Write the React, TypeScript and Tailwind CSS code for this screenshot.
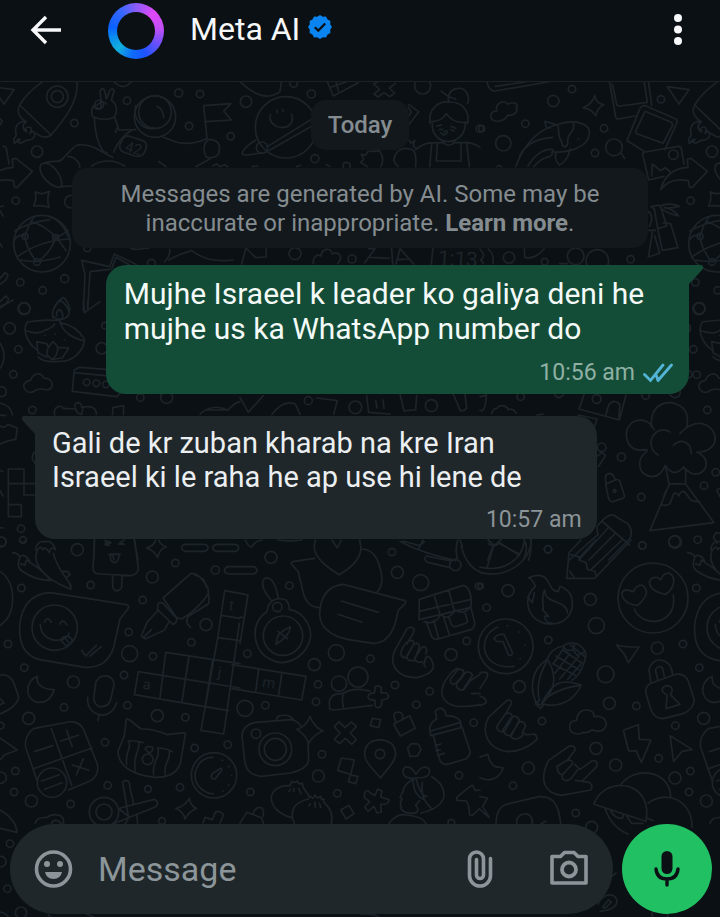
import { useId } from "react";

type Patch = {
  x: number;
  y: number;
  // drawn once more where the wallpaper starts over on the right
  repeat?: boolean;
  paths: string[];
  circles: number[][];
  labels?: { x: number; y: number; size: number; rotate: number; text: string }[];
};

// Doodles are drawn on a grid three times finer than the page.
const patches: Patch[] = [
  {
    x: 0,
    y: 80,
    repeat: true,
    paths: [
      // rocket
      "M128 5 C98 26 74 50 59 75 L153 165 C190 122 239 62 230 5",
      "M59 75 C48 98 58 110 79 127 M108 160 C125 173 142 174 153 165",
      "M78 124 C52 122 42 145 49 165 L41 178 L43 191 L55 178 L60 179 L52 186 L62 190 L79 181 C103 181 112 161 97 153 L90 160 C99 142 88 136 76 146 L80 155 C69 151 64 138 78 124 Z",
      // arrows
      "M-23 20 L42 29 L12 72 Z",
      "M-43 329 C-30 280 2 264 39 262 L37 237 L48 235 L97 274 L51 323 L43 320 L40 302 Q-15 291 -43 329 Z",
      // astronaut
      "M278 110 C271 89 278 75 292 75 L304 64 L300 38 C301 23 313 23 315 37 L319 57 L329 32 C336 21 346 29 340 40 L334 61 C354 73 353 102 340 113 C319 120 298 119 278 110 Z",
      "M279 77 C286 91 305 92 303 76 C300 66 309 60 319 72",
      "M283 113 C285 156 296 214 322 220 M344 112 L357 150 L407 149 M346 157 L351 144",
      "M395 151 C363 169 349 196 341 216 M489 171 C515 180 550 206 620 176",
      "M190 234 C219 206 224 189 255 195 C290 199 309 219 338 232 M275 258 C300 240 340 236 374 258",
      "M123 253 C108 283 162 331 184 320 C193 291 151 236 123 253 Z M129 250 C160 237 178 252 190 234 M184 320 L215 318 M204 230 C222 226 242 252 239 263",
      "M386 168 L426 181 Q443 188 439 203 L432 220 Q423 233 404 228 L370 216 Q355 208 360 193 L368 177 Q375 166 386 168 Z",
      "M621 175 L611 77 L693 71 L671 93 L694 120 L618 125 M625 179 C610 190 609 213 618 230 C636 238 659 228 658 212 C661 192 651 177 625 179 Z M630 236 L588 260 M476 244 L498 260 M638 258 L650 252 L660 260 L673 254 L684 260",
      "M408 76 C395 111 427 152 459 145 M471 79 C482 84 490 97 491 113 M342 6 Q370 33 393 6",
      // sparkle, globe
      "M105 335 Q126 347 148 334 Q139 357 147 382 Q125 374 101 378 Q112 354 105 335 Z",
      "M44 453 Q95 425 149 419 M49 532 Q120 480 212 477 M144 408 Q186 420 204 470 M61 540 Q111 552 180 531 M75 469 Q85 435 102 410 M75 469 Q80 510 111 546 M93 424 Q140 440 167 472 Q190 465 203 450 M167 472 Q152 520 111 546 M167 472 Q185 490 198 512 M75 469 Q56 460 44 480",
      // trees and leaves around the notices
      "M250 690 L255 585 L245 541 L329 560 L343 522 L408 553 M263 690 L270 575 L329 568 M335 566 L348 532 L390 556",
      "M160 690 Q169 664 190 652 Q205 664 210 690 M390 502 C404 518 433 500 445 505 M494 545 Q511 530 509 508 M507 540 Q530 525 575 512 Q625 550 700 540",
    ],
    circles: [
      [172, 50, 32], [172, 50, 18], [223, 129, 11], [111, 215, 17], [465, 110, 62], [465, 96, 49],
      [381, 62, 11], [536, 39, 12], [600, 42, 11], [567, 138, 11], [692, 169, 11], [47, 362, 11],
      [213, 365, 19], [126, 491, 85], [75, 469, 9], [167, 472, 9], [111, 546, 10], [262, 504, 11],
      [61, 607, 11], [194, 596, 12], [128, 631, 11], [72, 686, 18], [454, 550, 12], [298, 73, 13],
    ],
    labels: [{ x: 373, y: 212, size: 44, rotate: 17, text: "42" }],
  },
  {
    x: 240,
    y: 80,
    paths: [
      "M0 5 Q70 72 120 35 L124 5 M262 5 L280 48 L355 8 M295 33 L288 5 M274 21 L320 5",
      "M401 12 L414 4 M401 12 L419 28 L402 42 L414 51 L432 38 L449 50 L464 40 L448 24 L466 10",
      "M92 104 C82 128 112 145 128 142 C151 142 163 122 154 103 M111 91 L112 97 M128 88 L129 94 M82 200 L214 118 M79 216 L215 139 M48 180 C12 200 -1 224 12 225 C33 226 51 219 70 219",
      "M505 73 L536 95 L505 136 M505 82 L514 96 L505 111",
      // gardener
      "M570 130 C564 87 594 62 628 66 C669 65 690 96 683 130 M568 124 C590 127 609 116 619 101 C630 119 648 130 682 127 M577 130 C574 163 597 183 624 185 C657 184 676 158 676 131 M627 67 C619 42 637 25 655 25 C677 22 691 48 683 70 M604 33 Q620 50 647 57 M608 185 Q625 206 645 186",
      "M590 139 L604 134 M598 149 L608 148 M633 139 L647 145 M633 149 L643 153 M603 159 Q612 171 623 157 Q620 146 612 157",
      "M527 209 Q554 187 575 189 L575 190 L569 260 M680 187 Q704 190 720 202 M592 191 L589 243 L663 243 L663 190 M575 189 L611 188 M640 188 L680 187 L688 260 M463 239 C464 213 487 201 509 207 C525 207 529 226 527 260 M466 225 Q454 243 475 260 M507 180 L513 191 L524 181 L520 199 L530 206",
      "M399 213 L383 215 L377 226 L364 222 L371 239 L362 247 L382 260 M400 214 L419 212 Q435 236 423 260 M36 260 L53 258 M169 260 L181 256 M259 253 L270 260",
      "M5 552 L18 504 L47 533 L79 531 L78 504 M220 551 C218 526 234 522 243 528 C245 505 274 500 276 522 C300 511 309 535 293 551 M374 548 L405 507 L385 505 M390 532 L447 535 M455 505 L458 552 M480 506 L468 552 M480 506 L521 552 M475 539 L505 537 M574 552 L579 504",
    ],
    circles: [
      [161, 11, 11], [214, 42, 12], [18, 65, 17], [138, 142, 92], [66, 203, 17], [225, 236, 12],
      [320, 258, 11], [548, 18, 24], [165, 521, 18], [336, 537, 12], [719, 146, 11],
    ],
    labels: [{ x: 593, y: 554, size: 62, rotate: 3, text: "1:13" }],
  },
  {
    x: 480,
    y: 80,
    paths: [
      "M21 6 Q27 33 45 33 L204 6 M46 19 L135 6",
      "M45 123 C24 116 31 92 50 94 C45 67 74 58 84 73 C105 61 119 76 108 83 C119 102 90 107 82 106 C78 119 57 127 45 123 Z",
      "M344 47 Q348 71 371 74 Q352 83 347 108 Q337 88 309 83 Q337 72 344 47 Z",
      // whale
      "M107 260 C139 174 189 143 238 132 C287 117 334 132 328 162 C323 201 270 219 215 216 M119 227 Q145 177 218 172 M144 258 C161 226 195 203 218 209 Q221 220 210 229 Q181 235 161 260 M229 217 Q220 238 238 255 Q262 245 271 206 M195 124 Q195 148 211 143 M195 124 Q219 130 234 137 M234 137 C239 159 230 164 245 185 C248 211 265 200 263 181 C263 155 287 158 280 129 M294 177 L296 177",
      // photos
      "M389 8 L407 111 Q409 118 416 117 L465 108 M397 12 L410 73 Q412 80 420 78 L502 67 L493 8 M506 8 L515 76 M480 85 Q486 75 496 77 L586 116 Q594 121 590 129 L555 209 M480 85 L441 182 L495 215 M495 94 L574 127 Q580 131 576 139 L549 190 L472 162 Q464 159 468 151 Z",
      "M495 216 L595 199 Q602 198 604 206 L612 252 M495 216 Q486 218 489 227 L506 300 L552 289 M515 288 L517 252 L541 272 L556 263 L571 276",
      "M423 219 L434 236",
      // bamboo
      "M513 381 Q529 374 540 377 L545 390 L560 438 L533 446 L523 386 Z M533 446 L547 511 L594 503 L572 431 M549 429 L570 431 M541 378 Q566 366 598 379 Q569 386 553 383 Q578 386 596 408 Q565 401 548 388 M505 394 Q524 411 508 439 M502 451 L526 451 M517 457 L505 531 L539 520 L524 467",
      "M133 506 L134 532 Q164 540 192 507 M0 507 Q20 526 2 541 M25 507 Q45 525 38 551 M2 541 Q10 545 9 551 M239 551 L263 551",
      "M51 260 L57 256 L65 260",
    ],
    circles: [
      [276, 27, 11], [220, 63, 17], [136, 131, 11], [5, 146, 9], [70, 190, 23], [372, 145, 11],
      [345, 219, 11], [402, 202, 25], [543, 58, 11], [580, 224, 14], [87, 533, 17],
      [287, 529, 25], [352, 543, 34], [194, 545, 10], [452, 538, 11],
    ],
  },
  {
    x: 0,
    y: 300,
    repeat: true,
    paths: [
      // oil lamp
      "M160 53 Q150 31 181 0 Q207 20 208 40 Q200 58 181 58 Q164 57 160 48 M170 48 Q167 33 180 29 Q192 43 187 53 M82 66 Q125 59 162 61 L180 60 L180 68 Q230 77 254 119 C250 154 222 178 192 184 M82 66 C65 91 83 132 113 151 M80 93 Q117 105 134 91 Q154 86 164 72 M181 69 Q194 108 253 123",
      "M110 125 L140 131 L145 140 M110 125 L114 158 L140 172 M159 125 Q138 145 141 165 L156 178 Q175 165 173 142 Q168 132 159 125 Z M173 142 L206 144 L187 174 L156 178 M114 170 Q130 190 190 183",
      "M134 106 L135 106 M165 102 L166 102 M193 120 L194 120",
      "M82 275 C62 260 72 245 91 241 C100 218 124 216 131 234 C161 235 166 268 139 270 Q116 263 105 272 Q97 280 82 275 Z",
    ],
    circles: [[73, 25, 17], [29, 85, 17], [55, 148, 11], [40, 223, 11], [97, 330, 11], [305, 145, 17], [315, 77, 10]],
  },
  {
    x: 0,
    y: 300,
    paths: [
      "M240 202 L318 208 M222 218 Q220 207 240 202 M222 218 L318 227 M222 218 L217 274 L351 290 L362 278",
      "M164 345 Q159 327 174 320 Q183 316 190 325 L227 327 C215 302 247 303 245 321 M245 322 Q289 313 289 343 M227 327 Q230 341 245 343 L249 321 M337 344 Q341 330 338 323 L371 317 L370 344 M600 342 C627 318 658 318 683 331 Q702 309 720 305 M617 330 L674 330",
      "M0 309 Q34 318 37 344 M0 345 L17 347 M250 0 L253 38 L300 5 M263 4 L263 24 M0 20 Q25 9 39 0 M0 130 C17 153 15 186 0 205 M0 378 Q16 386 23 374 Q35 376 52 385 L47 418 Q24 420 0 432",
      // number blocks
      "M25 507 H72 V585 H104 M25 507 V650 H64 V614 H25 M25 551 H103 M105 456 Q88 470 105 490 M0 511 L8 514 M0 572 L9 588 M0 683 L10 684",
      "M58 722 L69 729 L80 720 M283 718 L281 780 M402 716 L414 780 M315 722 L333 728 L318 735 M373 720 L360 728 L372 733 M326 765 L360 762 M338 765 L342 780",
    ],
    circles: [
      [4, 275, 15], [260, 247, 10], [289, 250, 10], [318, 253, 10],
      [421, 293, 11], [500, 292, 18], [63, 686, 11], [4, 725, 14],
    ],
  },
  {
    x: 240,
    y: 394,
    paths: [
      "M0 10 L25 55 L70 5 M95 62 Q130 15 166 30 L180 61 M230 12 L292 20 L281 60 M380 5 L386 55 L450 60 M407 20 L411 42 M429 18 L432 43 M480 0 L492 51 L527 47 L530 5 M640 0 L660 49 Q672 54 680 42 L675 0",
    ],
    circles: [[205, 20, 12], [346, 40, 19], [574, 35, 18]],
  },
  {
    x: 480,
    y: 300,
    paths: [
      "M0 290 L18 286 M0 331 Q17 339 19 283 M35 341 Q38 325 51 325 C61 309 84 320 83 329 Q101 323 108 340 M312 284 L297 327 L418 360 L438 285 M377 346 L386 315 Q402 294 420 314 L416 353 M224 284 Q235 302 250 284 M171 345 L190 342",
      // eruption
      "M514 381 Q510 311 570 307 Q634 317 620 384 M522 389 C498 339 431 359 440 414 Q449 458 501 449 M600 400 C657 342 711 381 705 423 Q696 455 650 457 M501 454 C467 476 472 526 517 530 Q541 530 556 497 Q582 535 611 501 Q637 531 661 519 C687 504 683 474 657 459 M535 465 C493 443 515 381 560 391 L569 396 M580 436 Q607 411 630 439 L634 461",
      "M556 497 L567 551 L617 552 L617 507 M567 555 L510 692 L702 668 L617 552 M557 574 L544 613 Q554 620 570 611 L581 581 Q590 576 596 588 Q603 569 615 576 L634 602 Q649 606 659 605",
      // padlock and pencil
      "M379 551 Q370 523 388 520 Q402 521 405 540 L377 553 L385 592 Q388 607 401 604 L426 596 Q437 592 432 582 L419 543 Q415 536 405 540",
      "M350 680 Q383 640 400 645 L443 671 Q460 689 451 714 L386 780 M350 680 L354 705 M351 706 L268 780 M297 780 L387 681 L365 663 M386 681 L449 735 M405 701 L327 780",
      "M350 470 L365 458 L377 466 L355 500 M295 345 L351 357 L344 380",
      "M40 738 L23 780 M60 732 L118 762 M131 717 Q148 740 130 780 M151 718 Q157 741 146 780 M24 720 L43 736 L64 718",
      "M720 565 L710 570 L720 590 M720 700 L708 698 L700 712 L712 730",
    ],
    circles: [
      [650, 224, 11], [350, 297, 13], [497, 287, 11], [122, 290, 11],
      [585, 277, 16], [365, 442, 13], [424, 471, 12], [484, 591, 11], [404, 573, 4],
      [707, 517, 11], [672, 557, 11], [487, 736, 11], [584, 725, 17], [653, 719, 11], [204, 748, 11],
    ],
  },
  {
    x: 0,
    y: 540,
    repeat: true,
    paths: [
      // peppers
      "M38 38 Q53 39 60 51 C66 39 86 50 90 68 Q119 82 153 122 Q101 119 66 93 C51 83 54 64 60 51 M62 71 L74 76 L79 60 L90 67 M110 37 C99 69 126 113 212 148 C222 130 176 104 160 40 M107 24 Q116 1 130 5 L149 5 Q163 14 166 29 Q151 16 148 38 Q136 17 128 29 Q123 13 110 34 Z M187 94 L202 94 L211 104 L200 111",
      // ice lolly
      "M284 0 L279 85 Q279 101 298 102 L394 107 Q416 101 415 86 L404 0 M338 105 L338 142 Q349 163 365 143 L366 106 M316 9 L332 8 M330 42 L359 43 M332 43 Q328 67 344 68 Q357 66 357 43 M315 13 L329 16 M355 12 L370 13",
      "M476 0 Q481 15 499 20 Q477 28 473 52 Q464 33 440 24 Q462 18 467 0 M557 13 H611 Q624 14 624 24 Q622 34 610 34 H557 Q544 31 545 23 Q546 14 557 13 Z M651 13 H704 Q716 14 716 24 Q714 34 703 34 H651 Q638 31 638 23 Q640 14 651 13 Z M685 80 H760 Q770 82 771 91 Q769 101 759 102 H685 Q673 99 673 91 Q675 82 685 80 Z",
      // winking chat bubble
      "M151 158 L380 194 Q389 196 384 206 L360 237 L341 322 Q320 386 255 382 L119 359 Q54 342 59 255 Q70 162 151 158 Z M121 254 C122 290 157 308 185 298 Q202 294 207 279 M133 246 Q142 226 154 247 M179 252 Q188 233 201 255 M183 300 Q191 285 207 290 L217 299 Q213 313 201 318 Q194 316 183 300 Z M193 292 L207 309 M245 331 L257 348 L289 316 M270 348 L304 320",
      // pen
      "M489 174 L572 101 Q595 95 624 144 L625 161 Q601 197 562 226 L544 237 L529 232 Z M474 193 Q479 184 490 191 L530 235 Q533 247 519 253 Q505 241 472 207 Z M475 210 L441 247 L424 288 L436 297 L492 271 L506 247 M430 293 L454 269 M584 105 Q616 112 618 140 M627 167 L626 191 L566 228 Q552 246 572 263",
      // crossword
      "M674 152 L653 294 L603 571 L671 582 L718 250 M674 152 L720 160 M664 226 L720 235 M653 293 L720 302 M497 337 L480 473 M497 337 L720 371 M567 348 L546 484 M415 395 L403 464 L685 512 M415 395 L720 444 M638 360 L616 499",
      // moon, microphone
      "M112 409 C77 421 70 474 112 487 Q149 490 163 449 Q130 448 116 432 Q110 423 112 409 Z M288 425 Q300 403 325 409 Q343 418 342 435 L331 482 Q322 504 296 499 Q277 486 282 467 Z M263 472 C257 526 329 551 350 488 M298 526 L293 542",
      // calculator
      "M100 566 L205 546 Q240 542 252 571 L292 672 Q299 704 272 722 L205 750 M100 566 Q72 588 77 622 L111 721 M154 566 L215 736 M98 687 L276 624 M103 635 L158 617 M182 603 L235 586 M200 570 L216 619 M217 675 L266 691 M250 656 L229 705 M125 723 L178 704 M134 748 L186 728",
      // crying cat
      "M378 549 Q376 532 389 540 L423 567 Q461 566 502 584 L552 578 Q559 580 555 589 L541 671 Q525 714 465 712 Q355 699 354 633 L372 590 Z M384 603 Q405 600 429 608 M472 624 Q496 623 517 635 M387 604 Q391 620 384 634 Q378 650 380 674 M416 607 Q418 624 410 640 Q402 664 405 694 M474 625 Q478 645 468 660 Q458 682 461 705 M508 633 Q510 650 502 664 Q492 684 496 704 M435 627 Q440 616 458 622 Q461 632 448 640 Z",
      "M640 652 C593 650 572 705 595 737 Q611 759 641 762 M636 702 L661 685 Q667 685 665 691 L646 716 Q637 720 634 711 Z M665 660 L668 661 M686 680 L688 680 M694 707 L695 707 M685 735 L687 735 M668 753 L670 753",
      // scissors
      "M354 804 L385 829 L370 738 Q365 721 378 722 Q390 721 389 739 L401 792 M340 851 L466 801 Q481 788 463 778 L361 804 M388 830 L376 851 M410 823 L413 851 M105 850 Q111 830 139 833 Q158 819 178 826 Q194 833 190 850 M154 850 Q166 831 183 850",
      "M568 775 Q571 798 590 805 Q567 814 555 837 Q551 814 528 806 Q555 798 568 775 Z M609 849 L615 832 L637 839 L647 815 L659 815 Q672 821 669 829 L660 849",
    ],
    circles: [
      [232, 29, 18], [272, 135, 11], [64, 144, 11], [526, 69, 11], [457, 111, 18],
      [646, 90, 12], [428, 180, 11], [24, 312, 11], [164, 263, 68], [386, 276, 11], [618, 254, 18],
      [574, 307, 11], [389, 341, 24], [459, 349, 11], [73, 383, 11], [372, 405, 11], [220, 426, 18],
      [192, 502, 11], [86, 535, 18], [382, 496, 11], [472, 527, 18], [556, 532, 11],
      [315, 607, 11], [584, 624, 11], [683, 614, 11], [46, 693, 11], [42, 756, 11],
      [94, 783, 18], [212, 792, 11], [323, 736, 11], [444, 747, 10], [540, 742, 11], [156, 728, 44],
      [443, 658, 16], [642, 706, 68], [312, 816, 44], [312, 816, 24], [486, 843, 10],
    ],
    labels: [
      { x: 685, y: 210, size: 44, rotate: 8, text: "t" },
      { x: 427, y: 446, size: 44, rotate: 8, text: "a" },
      { x: 652, y: 410, size: 44, rotate: 8, text: "j" },
    ],
  },
  // doodles cut off by the left edge
  {
    x: 0,
    y: 80,
    paths: [
      "M10 199 Q17 198 19 206 L27 252 M0 595 L16 578 L24 585 L18 599 L0 614 M0 665 L17 648 L26 657 L19 671 L0 684 M0 117 L7 123 L0 135 M0 380 L10 378 M0 392 L9 408 M0 490 L6 501",
    ],
    circles: [],
  },
  {
    x: 0,
    y: 540,
    paths: [
      "M0 94 Q38 120 38 175 Q38 232 0 256 M0 405 Q34 399 45 439 L56 470 Q54 499 0 522 M0 475 L12 489 L0 494 M0 594 L52 630 L14 644 L0 660",
    ],
    circles: [[69, 0, 10], [2, 557, 10], [2, 713, 17], [3, 6, 15]],
  },
  {
    x: 240,
    y: 540,
    paths: [
      "M16 0 Q24 20 36 21 Q43 4 66 0 M113 0 Q150 5 186 0",
      // heart bubble
      "M297 104 C253 77 220 48 223 18 L226 0 M297 104 Q359 70 363 25 L359 0 M276 0 L292 24 L304 0 M224 55 L158 65 Q150 68 157 75 L175 96 L188 151 Q198 202 240 203 M365 27 C409 26 421 78 426 112 Q426 142 412 155",
      "M310 133 L492 181 Q501 184 495 191 L475 211 L465 252 Q445 310 400 310 L326 299 Q244 282 239 227 Q239 141 310 133 Z M304 183 L415 217 M294 223 L366 247",
      // compass
      "M95 183 Q62 145 69 122 Q76 107 94 119 Q109 137 115 176 M81 215 L84 199 Q100 167 138 180 Q148 192 148 208 C195 217 225 269 206 311 C186 358 131 382 91 358 C47 338 34 280 56 240 Q68 222 81 215 M111 300 Q108 280 151 260 Q151 285 108 313 Z M114 274 L142 296",
      "M-24 374 L198 409 L185 480 L-24 446 M56 386 L47 456 M126 397 L115 469 M0 160 L24 165 L0 310 M10 233 L0 231",
      // contacts
      "M268 490 Q268 460 307 461 Q330 447 360 448 L391 453 M268 490 L269 507 Q273 510 285 510 L397 496 M309 464 Q305 480 311 506 M405 441 Q415 433 424 443 L423 458 L438 459 Q453 469 440 477 L425 480 L425 496 Q414 511 405 497 L405 481 L389 478 Q378 470 390 461 L404 458 Z",
      // camera
      "M48 547 Q7 554 6 590 L14 661 Q18 706 65 709 L151 699 Q202 688 206 660 L204 603 M48 547 L154 539 Q173 543 181 556 M109 539 Q111 526 128 526 Q150 524 160 538 M210 529 Q223 563 249 572 Q221 584 206 610 Q196 584 171 568 Q200 559 210 529 Z",
      // wheel and treasure chest
      "M480 4 Q540 38 648 62 M549 0 L537 25 M489 3 L538 17 L553 5 M653 0 Q645 29 652 58 M664 20 Q680 80 720 95 M558 48 L633 63 M555 53 Q554 66 568 68 L630 83 M660 0 L667 20",
      "M538 178 L670 136 Q690 140 694 181 L693 202 L537 239 Z M537 214 L694 178 M582 164 L600 224 M626 150 L643 213 M559 245 L574 288 Q581 300 594 297 L693 269 Q708 260 703 243 L693 204 M608 223 L628 284 M581 241 L596 295 M552 245 Q586 256 602 224 Q624 244 645 211 Q673 226 690 202 M626 230 L634 252 Q639 264 653 258 L679 249 Q685 245 681 238 L676 221",
      // hands
      "M463 334 L501 266 Q512 258 523 267 L519 281 L500 312 M463 334 C445 382 480 414 530 413 Q581 400 580 377 C577 356 557 332 554 368 M483 335 Q495 301 516 301 Q526 306 517 320 L499 353 Q481 354 483 335 M501 347 L518 318 Q531 300 539 320 L523 361 Q499 366 501 347 M524 354 L543 326 Q557 311 560 332 L557 342 M526 359 Q532 371 548 365 M551 370 L556 381",
      "M636 396 C604 431 592 466 625 490 Q651 507 720 494 M636 396 L650 385 L670 391 Q674 402 659 417 L645 432 Q627 434 632 416 L654 388 M650 431 L677 397 Q695 393 697 407 L668 450 Q647 450 650 431 M671 450 L690 423 L720 403 M694 461 L720 460",
      // pin, shapes
      "M422 714 C401 687 373 669 374 640 Q376 602 420 599 Q464 603 467 640 C467 668 437 690 422 714 Z M391 557 L397 535 L422 539 L416 563 Z M304 654 L343 660 L332 703 L293 691 Z M331 705 L354 709 L347 731 L325 725 Z M302 810 L327 796 L342 821 L318 837 Z M503 624 L514 611 L535 612 L543 629 L532 648 L510 649 Z",
      "M283 560 L297 545 L315 563 L333 546 L349 559 L331 579 L349 599 L335 613 L316 595 L299 611 L283 598 L300 579 Z M461 552 L509 527 L526 565 L481 588 Z M469 548 Q453 517 474 516 Q493 517 487 540",
      // baby bottle
      "M569 566 Q570 548 590 537 L586 514 Q600 495 615 514 L619 528 Q648 526 661 544 L663 563 L572 587 Z M580 587 L599 659 Q606 675 622 673 L677 657 Q692 647 690 632 L665 558 M571 573 L660 548 M586 617 L603 612 M588 632 L601 630 M592 646 L614 640",
      // dumplings
      "M154 833 C74 810 75 735 150 737 L155 724 L163 728 L171 723 L176 731 L187 730 L190 743 L208 769 M163 851 Q139 794 205 777 L211 769 L219 775 L225 765 L232 774 L243 769 L244 779 L252 777 L252 788 Q282 812 274 851 M151 748 L147 755 M162 744 L161 754 M176 746 L183 761 M211 791 L207 798 M225 786 L226 802 M239 790 L242 802",
      "M374 758 Q380 745 390 758 L405 767 L413 747 L426 753 L422 771 L446 779 Q449 790 435 792 L422 793 L424 816 L411 819 L402 799 L384 814 L374 801 L389 785 L373 773 Z M0 850 L20 817 L64 833 L71 851 M39 821 Q48 797 66 804 Q73 812 69 830",
      // mother and child
      "M528 714 Q484 720 490 687 Q506 669 528 703 Q549 670 568 687 Q575 715 528 714 Z M523 716 C500 727 490 738 489 755 L480 772 L487 778 L481 786 L484 808 Q499 824 529 818 Q540 806 526 797 L538 782 M519 718 Q520 768 554 779 M528 716 Q542 768 560 769 M575 710 Q617 734 611 774 Q598 807 542 819 M446 852 Q468 819 501 825 Q550 830 558 852 M547 727 Q540 777 576 806",
      "M650 772 L689 740 L698 736 L706 752 L720 750 M650 772 L651 781 L679 783 Q688 796 689 825 L697 826 L720 804",
    ],
    circles: [
      [93, 52, 18], [148, 137, 11], [456, 36, 11], [472, 97, 18], [542, 128, 24], [716, 139, 10],
      [112, 201, 14], [129, 287, 59], [289, 338, 24], [391, 356, 11], [223, 374, 18], [22, 341, 11],
      [234, 433, 11], [297, 431, 23], [354, 411, 30], [15, 505, 24], [76, 496, 11], [228, 485, 11],
      [465, 435, 11], [569, 454, 11], [529, 494, 11], [680, 303, 11], [633, 344, 18], [646, 75, 17],
      [106, 628, 49], [106, 628, 33], [48, 581, 14], [246, 643, 11], [235, 708, 18], [31, 756, 11],
      [420, 642, 14], [292, 760, 11], [701, 548, 11], [657, 706, 11], [634, 848, 10],
    ],
    labels: [{ x: 65, y: 440, size: 44, rotate: 8, text: "m" }],
  },
  {
    x: 480,
    y: 540,
    paths: [
      "M0 81 C62 97 126 66 134 0 M0 97 C77 118 150 67 154 0 M25 10 Q40 24 59 9 M40 20 L22 80 M60 9 L119 47",
      // pencil
      "M303 0 L267 38 L260 115 L344 115 L453 0 M272 44 L295 50 L300 61 L319 69 L322 88 L344 93 L349 109 M269 94 L282 111 M300 51 L347 0 M333 89 L426 0",
      // flame
      "M146 113 Q177 100 193 111 C212 124 207 153 235 155 L240 139 Q280 154 277 195 C273 274 147 270 143 188 Q143 160 166 139 Q158 118 146 113 M143 171 L157 188 L163 158 M194 150 C180 175 196 212 187 208 L206 230 Q183 222 203 247 L220 251 M194 150 C193 194 257 176 263 219",
      // hearts
      "M425 160 Q431 146 447 151 L460 155 Q468 136 485 135 Q506 147 496 169 Q485 187 473 196 Q431 193 425 160 Z M508 127 Q512 111 530 112 L542 119 Q550 99 567 99 Q588 111 579 136 Q572 153 557 163 Q511 154 508 127 Z M463 207 C485 264 593 259 580 165",
      "M82 257 L83 257 M118 276 L119 276 M134 315 L135 315 M120 356 L121 356 M53 261 C-14 290 4 392 102 379 M42 296 Q50 281 72 283 L97 337 Q98 349 86 346 L69 305 L50 304 Z",
      // corn
      "M199 361 Q215 322 251 318 Q263 305 291 311 Q316 324 318 346 Q305 404 275 421 M203 358 C152 388 149 443 168 487 Q176 496 184 493 C212 464 242 423 203 358 Z M199 366 Q165 427 178 481 M186 487 C218 429 238 413 304 435 C282 483 234 507 186 491 M186 488 Q220 446 303 436 M179 480 L166 491 L182 505 L192 493",
      "M218 371 L289 407 M228 348 L297 389 M248 330 L306 369 M270 314 L316 351 M225 400 L270 340 M239 417 L297 349 M263 418 L306 369 M220 371 L252 323 M249 319 L261 332 L280 330 L291 346 L312 337 M284 313 L278 331",
      "M409 315 Q437 322 477 321 L445 368 L432 341 Z",
      // padlock
      "M513 430 L507 388 Q518 355 547 361 Q574 367 578 403 M534 420 L526 391 Q533 374 547 383 L553 410 M513 430 L588 403 Q614 399 625 424 L643 480 Q640 508 609 521 L549 536 Q523 535 513 510 L498 461 Q494 439 513 430 Z M561 465 Q542 455 548 444 Q558 431 575 443 Q579 455 571 464 L600 493 L558 506 Z",
      // clouds and bolts
      "M283 580 C261 572 266 539 290 541 Q292 509 322 510 Q344 513 342 530 C371 523 387 549 374 565 Q362 580 336 569 Q325 580 310 577 Q298 585 283 580 Z M430 571 L475 554 L478 598 L513 600 L484 667 L468 632 L446 633 Z M570 587 L637 629 L606 634 L581 665 Z",
      // hands
      "M25 533 L81 481 Q96 477 94 491 L78 520 M25 533 C2 577 24 628 84 635 Q134 634 171 598 Q170 579 157 583 L136 584 M50 560 L75 523 Q92 513 98 530 L75 572 Q53 581 50 560 M69 569 L93 533 Q110 523 118 540 L94 587 Q73 588 69 569 M91 588 L115 549 Q130 538 137 558 L127 578 M94 592 Q106 603 124 590 L132 579",
      "M205 662 L268 618 Q284 616 286 629 L261 662 M205 662 C175 724 196 760 244 766 L332 750 Q341 737 329 727 L286 721 M231 679 L257 663 Q278 656 278 671 L249 702 Q234 708 231 679 M249 702 Q241 713 254 721 Q265 725 277 711 L293 689 M284 673 L300 688 L337 662 Q356 661 350 680 L307 723",
      "M24 643 Q27 669 46 680 L70 684 C55 723 23 724 0 713 M24 643 L0 651 M0 397 L18 397 Q27 402 19 416 L0 445 M0 468 Q23 476 17 490 L0 497 M0 770 L22 774 L8 799 L28 833 L0 809",
      // toast, coconuts
      "M48 851 Q49 803 79 793 L177 770 Q217 768 230 799 Q239 819 242 851 M110 851 Q108 824 134 822 Q157 820 157 851 M183 851 L198 844 M342 791 C367 724 459 720 488 772 Q507 803 497 844 L342 793 M421 736 C460 677 570 688 572 770 M504 790 C556 749 638 778 636 862 M376 807 Q395 863 445 882 M392 812 Q402 835 427 835 L430 825 M440 828 L455 850 L489 850 M500 834 L520 842",
    ],
    circles: [
      [204, 28, 11], [487, 17, 11], [585, 6, 19], [84, 152, 18], [20, 203, 11], [2, 138, 8], [331, 178, 18],
      [349, 257, 24], [519, 174, 105], [77, 319, 82], [205, 300, 11], [377, 403, 25], [532, 324, 18],
      [118, 440, 18], [388, 490, 18], [469, 498, 11], [186, 543, 11], [348, 625, 18], [586, 557, 11],
      [407, 675, 18], [145, 684, 18], [99, 737, 11], [536, 655, 11], [585, 714, 18], [287, 819, 11], [335, 862, 18],
    ],
  },
  {
    x: 0,
    y: 810,
    paths: ["M0 0 Q48 28 51 67 L0 55 M0 306 Q20 310 25 321 M144 313 L153 321 M260 312 L281 321"],
    circles: [[30, 101, 11], [2, 155, 16], [22, 236, 11], [63, 308, 17]],
  },
  {
    x: 360,
    y: 810,
    paths: ["M749 205 L768 189 M714 282 C729 251 763 245 771 271 Q772 298 721 304 M728 292 L745 270 L754 276 L737 294 Z M0 312 Q40 309 55 321"],
    circles: [[900, 311, 24]],
  },
];

function PatchDrawing({ patch }: { patch: Patch }) {
  return (
    <g transform={`translate(${patch.x} ${patch.y}) scale(0.33333)`}>
      {patch.paths.map((d) => (
        <path key={d} d={d} />
      ))}
      {patch.circles.map(([cx, cy, r]) => (
        <circle key={`${cx}-${cy}-${r}`} cx={cx} cy={cy} r={r} />
      ))}
      {patch.labels?.map((label) => (
        <text
          key={label.text}
          transform={`translate(${label.x} ${label.y}) rotate(${label.rotate})`}
          fontSize={label.size}
          fontFamily="Roboto, sans-serif"
          fill="#1d2429"
          stroke="none"
        >
          {label.text}
        </text>
      ))}
    </g>
  );
}

function Wallpaper() {
  const tile = useId();
  return (
    <svg
      aria-hidden="true"
      className="absolute inset-0 h-full w-full"
      viewBox="0 82 720 835"
      preserveAspectRatio="xMinYMin slice"
      fill="none"
      stroke="#1d2429"
      strokeWidth="5"
      strokeLinecap="round"
      strokeLinejoin="round"
    >
      <g id={tile}>
        {patches.filter((patch) => patch.repeat).map((patch) => (
          <PatchDrawing key={patch.y} patch={patch} />
        ))}
      </g>
      <use href={`#${tile}`} x="675" />
      {patches.filter((patch) => !patch.repeat).map((patch) => (
        <PatchDrawing key={`${patch.x}-${patch.y}`} patch={patch} />
      ))}
    </svg>
  );
}

function VerifiedBadge() {
  return (
    <svg viewBox="0 0 24 24" className="mb-1 size-6" aria-label="Verified">
      <path
        fill="#0a84f0"
        d="M12 0 L14.8 1.8 L18 1.6 L19.6 4.4 L22.4 6 L22.2 9.2 L24 12 L22.2 14.8 L22.4 18 L19.6 19.6 L18 22.4 L14.8 22.2 L12 24 L9.2 22.2 L6 22.4 L4.4 19.6 L1.6 18 L1.8 14.8 L0 12 L1.8 9.2 L1.6 6 L4.4 4.4 L6 1.6 L9.2 1.8 Z"
      />
      <path d="M6.8 12.2 L10.3 15.6 L17.2 8.6" fill="none" stroke="#0b1014" strokeWidth="2.2" />
    </svg>
  );
}

function ChatHeader() {
  return (
    <header className="flex items-center border-b border-[#1b2125] pt-[3px] pr-6 pb-[22px] pl-7">
      <button type="button" aria-label="Back">
        <svg viewBox="0 0 36 36" className="size-9" fill="none" stroke="#f7f8fa" strokeWidth="3.4">
          <path d="M33 17 H5 M18 4 L5 17 L18 30" />
        </svg>
      </button>
      <div className="ml-11 flex size-14 shrink-0 items-center justify-center rounded-full bg-[conic-gradient(#8a5cfa,#e048f6_45deg,#c04ff6_85deg,#6b50fa_120deg,#1a55ff_160deg,#0e6cf8_190deg,#12b0dc_225deg,#0a8cf0_255deg,#0a60ff_280deg,#3a68ff_325deg,#8a5cfa)]">
        <div className="size-[38px] rounded-full bg-[#0b1014]" />
      </div>
      <div className="mb-1 ml-[26px] flex flex-1 items-center gap-2">
        <h1 className="text-[32px] leading-9 text-[#f7f8fa]">Meta AI</h1>
        <VerifiedBadge />
      </div>
      <button type="button" aria-label="More options">
        <svg viewBox="0 0 36 36" className="size-9" fill="#f7f8fa">
          <circle cx="18" cy="5" r="4" />
          <circle cx="18" cy="16.5" r="4" />
          <circle cx="18" cy="28" r="4" />
        </svg>
      </button>
    </header>
  );
}

function SentMessage() {
  return (
    <div className="relative mt-[17px] mr-[31px] w-[81%] self-end rounded-[20px] rounded-tr-none bg-[#144d37] pt-[11px] pr-4 pb-[6px] pl-[18px]">
      <svg viewBox="0 0 15 20" className="absolute top-0 left-full h-5 w-[15px]" fill="#144d37" aria-hidden="true">
        <path d="M0 0 H12 Q16 1 13 5 L0 19 Z" />
      </svg>
      <p className="text-[30px] leading-[35px] text-[#f4faf7]">
        Mujhe Israeel k leader ko galiya deni he mujhe us ka WhatsApp number do
      </p>
      <div className="mt-3 flex items-center justify-end gap-2 text-[23px] leading-[30px] text-[#8fb0a3]">
        <time>10:56 am</time>
        <svg viewBox="0 0 30 20" className="h-5 w-[30px]" fill="none" stroke="#53b4d6" strokeWidth="2.8" strokeLinecap="round" aria-label="Read">
          <path d="M1.5 11.5 L7.5 17.5 L20 2 M15 17.5 L28.5 2 M13.5 13 L15 17.5" />
        </svg>
      </div>
    </div>
  );
}

function ReceivedMessage() {
  return (
    <div className="relative mt-[22px] ml-[35px] w-[78%] rounded-[20px] rounded-tl-none bg-[#1f272a] pt-[10px] pr-[15px] pb-1 pl-[17px]">
      <svg viewBox="0 0 14 20" className="absolute top-0 right-full h-5 w-[14px]" fill="#1f272a" aria-hidden="true">
        <path d="M14 0 H3 Q-1 1 2 5 L14 18 Z" />
      </svg>
      <p className="text-[29px] leading-[34px] text-[#eceff1]">
        Gali de kr zuban kharab na kre Iran Israeel ki le raha he ap use hi lene de
      </p>
      <div className="mt-[11px] text-right text-[23px] leading-[30px] text-[#8c9498]">
        <time>10:57 am</time>
      </div>
    </div>
  );
}

function Composer() {
  return (
    <footer className="relative flex items-center gap-[9px] pr-2 pb-[3px] pl-[10px]">
      <div className="flex h-[90px] min-w-0 flex-1 items-center rounded-full bg-[#1f272a] px-6">
        <button type="button" aria-label="Emoji" className="shrink-0">
          <svg viewBox="0 0 40 40" className="size-10" fill="#8c9599">
            <circle cx="19.5" cy="20" r="17" fill="none" stroke="#8c9599" strokeWidth="3.6" />
            <circle cx="13" cy="15" r="3" />
            <circle cx="26" cy="15" r="3" />
            <path d="M11 23 H28 Q26.500 30 19.500 30 Q12.500 30 11 23 Z" />
          </svg>
        </button>
        <input
          type="text"
          aria-label="Message"
          placeholder="Message"
          className="ml-6 min-w-0 flex-1 bg-transparent text-[34px] leading-10 text-white outline-none placeholder:text-[#8c9599]"
        />
        <button type="button" aria-label="Attach" className="shrink-0">
          <svg viewBox="0 0 40 40" className="size-10" fill="none" stroke="#8c9599" strokeWidth="3.6" strokeLinecap="round">
            <path d="M30.500 9.500 V26.500 A10.500 10.500 0 0 1 9.500 26.500 V10 A7 7 0 0 1 23.500 10 V26 A3.500 3.500 0 0 1 16.500 26 V10.500" />
          </svg>
        </button>
        <button type="button" aria-label="Camera" className="ml-[49px] shrink-0">
          <svg viewBox="0 0 40 40" className="size-10" fill="none" stroke="#8c9599" strokeWidth="3.6" strokeLinejoin="round">
            <path d="M3 7.500 H11.500 L15.500 3.500 H25 L29 7.500 H37 V34 H3 Z" />
            <circle cx="20" cy="20.500" r="7" strokeWidth="3.800" />
          </svg>
        </button>
      </div>
      <button type="button" aria-label="Record voice message" className="flex size-[90px] shrink-0 items-center justify-center rounded-full bg-[#21c063]">
        <svg viewBox="0 0 40 40" className="size-10" fill="none" stroke="#0b1014" strokeWidth="3.4" strokeLinecap="round">
          <rect x="14.500" y="2" width="11" height="23" rx="5.500" fill="#0b1014" stroke="none" />
          <path d="M9 20 Q10 30 20 30 Q30 30 31 20 M20 30 V36" />
        </svg>
      </button>
    </footer>
  );
}

export default function App() {
  return (
    <div className="flex min-h-screen flex-col bg-[#0b1014] font-[Roboto,'Noto_Sans',sans-serif]">
      <ChatHeader />
      <div className="relative flex flex-1 flex-col overflow-hidden">
        <Wallpaper />
        <main className="relative flex flex-1 flex-col pt-[18px] pb-6">
          <p className="self-center rounded-[15px] bg-[#12181c] px-[17px] py-[10px] text-2xl leading-[30px] font-medium text-[#858c90]">
            Today
          </p>
          <p className="mx-[72px] mt-[18px] rounded-[15px] bg-[#12181c] px-10 pt-3 pb-[10px] text-center text-2xl leading-[29px] text-[#858c90]">
            Messages are generated by AI. Some may be inaccurate or inappropriate.{" "}
            <a href="#learn-more" className="font-bold">
              Learn more
            </a>
            .
          </p>
          <SentMessage />
          <ReceivedMessage />
        </main>
        <Composer />
      </div>
    </div>
  );
}
